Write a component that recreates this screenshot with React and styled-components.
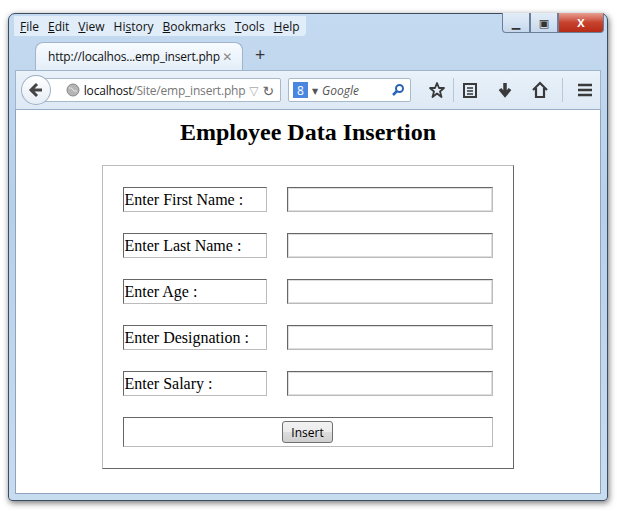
import React from "react";
import styled, { createGlobalStyle } from "styled-components";

const Global = createGlobalStyle`
  body { margin: 0; background: #fff; font-family: "Segoe UI", "Open Sans", "DejaVu Sans", sans-serif; }
`;

const Page = styled.div`
  width: 617px;
  height: 511px;
  padding: 13px 9px 10px 8px;
  box-sizing: border-box;
`;

const Frame = styled.div`
  height: 100%;
  border: 1px solid #3c4d63;
  border-radius: 7px 7px 4px 4px;
  background: linear-gradient(180deg, #c4daf0 0%, #b7d0ea 40%, #c8dcf0 100%);
  box-shadow: 1px 2px 6px rgba(0,0,0,0.55);
  display: flex;
  flex-direction: column;
  padding: 0 6px 6px 6px;
  box-sizing: border-box;
`;

const TopRow = styled.div`
  display: flex;
  justify-content: space-between;
  height: 24px;
`;

const Menu = styled.div`
  display: flex;
  gap: 9px;
  align-items: center;
  background: rgba(230,240,250,0.85);
  padding: 0 6px;
  margin-left: -1px;
  height: 20px;
  margin-top: 2px;
  border-radius: 0 0 4px 0;
  font-size: 12px;
  color: #111;
`;

const WinBtns = styled.div`
  display: flex;
  margin-top: -1px;
  margin-right: -3px;
  height: 20px;
`;

const WinBtn = styled.div`
  width: ${p => p.w}px;
  height: 19px;
  border: 1px solid #6d7f98;
  border-top: none;
  background: ${p => p.close ? "linear-gradient(#e8a093, #c7432e 50%, #b52b17)" : "linear-gradient(#e3edf8, #c6d8ee)"};
  color: ${p => p.close ? "#fff" : "#333"};
  font-size: 11px;
  font-weight: bold;
  display: flex;
  align-items: center;
  justify-content: center;
  border-radius: ${p => p.r || "0"};
`;

const TabRow = styled.div`
  display: flex;
  align-items: flex-end;
  height: 32px;
  padding-left: 20px;
`;

const Tab = styled.div`
  width: 208px;
  height: 28px;
  background: linear-gradient(#f7fbff, #e4eef8);
  border: 1px solid #a0b4cc;
  border-bottom: none;
  border-radius: 8px 8px 0 0;
  display: flex;
  align-items: center;
  padding: 0 10px 0 12px;
  justify-content: space-between;
  font-size: 12px;
  letter-spacing: -0.2px;
  color: #111;
  box-sizing: border-box;
  white-space: nowrap;
`;

const Plus = styled.div`
  font-size: 18px;
  color: #333;
  margin: 0 0 4px 12px;
`;

const NavBar = styled.div`
  height: 38px;
  background: linear-gradient(#e9f1f9, #dde9f5);
  border: 1px solid #a0b4cc;
  border-bottom-color: #98adc6;
  display: flex;
  align-items: center;
  padding: 0 6px 0 5px;
  gap: 7px;
`;

const Back = styled.div`
  width: 28px;
  height: 28px;
  border-radius: 50%;
  background: linear-gradient(#fff, #e6edf5);
  border: 1px solid #9fb0c4;
  display: flex;
  align-items: center;
  justify-content: center;
  position: relative;
  z-index: 1;
`;

const UrlBox = styled.div`
  width: 238px;
  height: 24px;
  margin-left: -14px;
  background: #fff;
  border: 1px solid #a9b9cc;
  border-radius: 0 2px 2px 0;
  display: flex;
  align-items: center;
  padding: 0 6px 0 21px;
  font-size: 12px;
  letter-spacing: -0.2px;
  color: #777;
  gap: 4px;
  box-sizing: border-box;
  white-space: nowrap;
  & b { color: #111; font-weight: normal; }
`;

const Search = styled.div`
  width: 124px;
  height: 24px;
  background: #fff;
  border: 1px solid #a9b9cc;
  border-radius: 2px;
  display: flex;
  align-items: center;
  gap: 4px;
  padding: 0 5px 0 4px;
  box-sizing: border-box;
  font-size: 12px;
  font-style: italic;
  color: #555;
`;

const GBadge = styled.div`
  width: 15px;
  height: 16px;
  background: #4a86e0;
  color: #fff;
  font-size: 12px;
  font-style: normal;
  display: flex;
  align-items: center;
  justify-content: center;
`;

const Icons = styled.div`
  display: flex;
  align-items: center;
  gap: 17px;
  margin-left: 10px;
  flex: 1;
`;

const Sep = styled.div`
  width: 1px;
  height: 24px;
  background: #b9c8d8;
  margin: 0 ${p => p.m || 0}px;
`;

const Content = styled.div`
  flex: 1;
  background: #fff;
  border: 1px solid #8ea3bd;
  border-top: none;
  font-family: "Liberation Serif", serif;
  display: flex;
  flex-direction: column;
  align-items: center;
`;

const Title = styled.h1`
  font-size: 24px;
  font-weight: bold;
  margin: 9px 0 19px;
  color: #000;
`;

const Table = styled.table`
  width: 412px;
  border: 1px solid;
  border-color: #bbb #666 #666 #bbb;
  border-spacing: 20px 21px;
  margin-left: -1px;
`;

const LabelCell = styled.td`
  width: 144px;
  height: 25px;
  border: 1px solid;
  border-color: #666 #bbb #bbb #666;
  font-size: 16px;
  padding: 0 1px;
  box-sizing: border-box;
`;

const InputCell = styled.td`
  padding: 0;
`;

const Field = styled.input`
  width: 206px;
  height: 25px;
  box-sizing: border-box;
  border: 1px solid;
  border-color: #666 #bbb #bbb #666;
  box-shadow: inset 0 0 0 1px #ddd;
  display: block;
`;

const ButtonCell = styled.td`
  height: 28px;
  border: 1px solid;
  border-color: #666 #bbb #bbb #666;
  text-align: center;
  padding: 0;
`;

const Btn = styled.button`
  font-family: "Segoe UI", "Open Sans", sans-serif;
  font-size: 12px;
  padding: 2px 8px;
  height: 22px;
  border: 1px solid #707070;
  border-radius: 3px;
  background: linear-gradient(#f2f2f2, #ebebeb 50%, #dddddd 51%, #cfcfcf);
`;

const rows = ["Enter First Name :", "Enter Last Name :", "Enter Age :", "Enter Designation :", "Enter Salary :"];

const Ico = ({ children }) => (
  <svg width="18" height="18" viewBox="0 0 18 18" fill="none" stroke="#3a3a3a" strokeWidth="2">{children}</svg>
);

export default function App() {
  return (
    <Page>
      <Global />
      <Frame>
        <TopRow>
          <Menu>
            <span><u>F</u>ile</span><span><u>E</u>dit</span><span><u>V</u>iew</span>
            <span>Hi<u>s</u>tory</span><span><u>B</u>ookmarks</span><span><u>T</u>ools</span><span><u>H</u>elp</span>
          </Menu>
          <WinBtns>
            <WinBtn w={26} r="0 0 0 4px">▁</WinBtn>
            <WinBtn w={26}>▣</WinBtn>
            <WinBtn w={44} close r="0 0 4px 0">X</WinBtn>
          </WinBtns>
        </TopRow>
        <TabRow>
          <Tab><span>http://localhos...emp_insert.php</span><span style={{ color: "#888" }}>✕</span></Tab>
          <Plus>+</Plus>
        </TabRow>
        <NavBar>
          <Back>
            <svg width="16" height="16" viewBox="0 0 16 16"><path d="M9 2 L3 8 L9 14 M3 8 H14" stroke="#444" strokeWidth="3" fill="none" /></svg>
          </Back>
          <UrlBox>
            <svg width="14" height="14" viewBox="0 0 14 14"><circle cx="7" cy="7" r="6" fill="#b5b5b5" stroke="#888" /><path d="M3 5 Q6 4 7 7 Q9 9 11 8" stroke="#e8e8e8" fill="none" /></svg>
            <span style={{ flex: 1 }}><b>localhost</b>/Site/emp_insert.php</span>
            <span style={{ color: "#aaa" }}>▽</span>
            <span style={{ color: "#666", fontSize: 14 }}>↻</span>
          </UrlBox>
          <Search>
            <GBadge>8</GBadge><span style={{ fontSize: 8, fontStyle: "normal" }}>▼</span>
            <span style={{ flex: 1 }}>Google</span>
            <svg width="14" height="14" viewBox="0 0 14 14"><circle cx="8.5" cy="5.5" r="3.5" stroke="#2a64b5" strokeWidth="2" fill="none" /><path d="M6 8 L2 12" stroke="#2a64b5" strokeWidth="2.5" /></svg>
          </Search>
          <Icons>
            <Ico><path d="M9 2 L11 7 L16 7 L12 10.5 L13.5 16 L9 12.5 L4.5 16 L6 10.5 L2 7 L7 7 Z" strokeWidth="1.8" strokeLinejoin="round" /></Ico>
            <Sep m={-10} />
            <Ico><rect x="3" y="3" width="12" height="13" strokeWidth="2" /><path d="M6 7 H12 M6 10 H12 M6 13 H12" strokeWidth="1.5" /></Ico>
            <Ico><path d="M9 2 V12 M4 8 L9 14 L14 8" strokeWidth="3.5" /></Ico>
            <Ico><path d="M2 9 L9 2 L16 9 M5 7 V16 H13 V7" strokeWidth="2.2" /></Ico>
            <Sep m={-4} />
            <Ico><path d="M2 4 H16 M2 9 H16 M2 14 H16" strokeWidth="2.5" /></Ico>
          </Icons>
        </NavBar>
        <Content>
          <Title>Employee Data Insertion</Title>
          <Table>
            <tbody>
              {rows.map(r => (
                <tr key={r}>
                  <LabelCell>{r}</LabelCell>
                  <InputCell><Field /></InputCell>
                </tr>
              ))}
              <tr>
                <ButtonCell colSpan={2}><Btn>Insert</Btn></ButtonCell>
              </tr>
            </tbody>
          </Table>
        </Content>
      </Frame>
    </Page>
  );
}
